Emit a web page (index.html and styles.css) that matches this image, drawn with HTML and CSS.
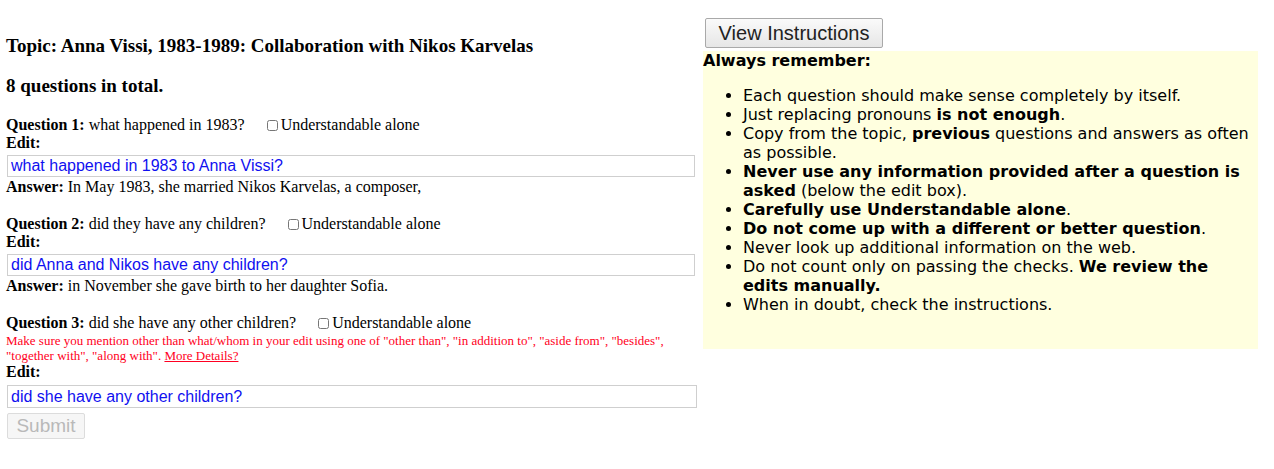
FILE: index.html
```html
<!DOCTYPE html>
<html>
<head>
<meta charset="utf-8">
<link rel="stylesheet" href="styles.css">
</head>
<body>
<div class="page">
  <div class="left">
    <h3 class="title">Topic: Anna Vissi, 1983-1989: Collaboration with Nikos Karvelas</h3>
    <h3 class="title">8 questions in total.</h3>

    <div class="q">
      <div class="qline"><b>Question 1:</b> what happened in 1983? <label class="ua"><input type="checkbox" class="cb">Understandable alone</label></div>
      <div class="lbl">Edit:</div>
      <input class="edit" type="text" value="what happened in 1983 to Anna Vissi?">
      <div class="ans"><b>Answer:</b> In May 1983, she married Nikos Karvelas, a composer,</div>
    </div>

    <div class="q">
      <div class="qline"><b>Question 2:</b> did they have any children? <label class="ua"><input type="checkbox" class="cb">Understandable alone</label></div>
      <div class="lbl">Edit:</div>
      <input class="edit" type="text" value="did Anna and Nikos have any children?">
      <div class="ans"><b>Answer:</b> in November she gave birth to her daughter Sofia.</div>
    </div>

    <div class="q">
      <div class="qline"><b>Question 3:</b> did she have any other children? <label class="ua"><input type="checkbox" class="cb">Understandable alone</label></div>
      <div class="warn">Make sure you mention other than what/whom in your edit using one of "other than", "in addition to", "aside from", "besides", "together with", "along with". <a href="#" class="more">More Details?</a></div>
      <div class="lbl">Edit:</div>
      <input class="edit edit3" type="text" value="did she have any other children?">
    </div>

    <button class="submit" disabled>Submit</button>
  </div>

  <div class="right">
    <button class="view">View Instructions</button>
    <div class="panel">
      <div class="remember">Always remember:</div>
      <ul class="rules">
        <li>Each question should make sense completely by itself.</li>
        <li>Just replacing pronouns <b>is not enough</b>.</li>
        <li>Copy from the topic, <b>previous</b> questions and answers as often as possible.</li>
        <li><b>Never use any information provided after a question is asked</b> (below the edit box).</li>
        <li><b>Carefully use Understandable alone</b>.</li>
        <li><b>Do not come up with a different or better question</b>.</li>
        <li>Never look up additional information on the web.</li>
        <li>Do not count only on passing the checks. <b>We review the edits manually.</b></li>
        <li>When in doubt, check the instructions.</li>
      </ul>
    </div>
  </div>
</div>
</body>
</html>
```

FILE: styles.css
```css
html, body {
  margin: 0;
  padding: 0;
  background: #ffffff;
}

.page {
  display: flex;
  align-items: flex-start;
  padding-left: 6px;
  gap: 6px;
  font-family: "Liberation Serif", "Times New Roman", serif;
  color: #000;
}

.left {
  width: 691px;
  flex: none;
  display: flex;
  flex-direction: column;
  align-items: flex-start;
  font-size: 16px;
  line-height: 18px;
}

.title {
  font-size: 19px;
  line-height: 22px;
  margin: 35px 0 0 0;
  font-weight: bold;
}

.title + .title {
  margin-top: 18px;
}

.q {
  display: flex;
  flex-direction: column;
  align-items: stretch;
  width: 100%;
}

.left > .title + .title + .q {
  margin-top: 19px;
}

.q + .q {
  margin-top: 19px;
}

.qline {
  height: 18px;
  white-space: nowrap;
}

.ua {
  margin-left: 18px;
  display: inline-flex;
  align-items: center;
  vertical-align: top;
  height: 18px;
}

.cb {
  width: 11px;
  height: 11px;
  margin: 1px 3px 0 0;
}

.lbl {
  font-weight: bold;
  height: 18px;
}

.edit {
  box-sizing: border-box;
  width: 688px;
  height: 22px;
  margin: 3px 0 0 1px;
  padding: 0 3px;
  border: 1px solid #cfcfcf;
  font-family: "Liberation Sans", Arial, sans-serif;
  font-size: 16px;
  color: #1010f0;
  background: #fff;
  outline: none;
}

.edit3 {
  width: 690px;
  margin-top: 4px;
  height: 23px;
}

.ans {
  margin-top: 1px;
}

.warn {
  color: #ff0022;
  font-size: 13px;
  line-height: 15px;
  margin: 1px 0 0 0;
}

.more {
  color: #ff0022;
  text-decoration: underline;
}

.submit {
  margin: 5px 0 0 1px;
  box-sizing: border-box;
  width: 78px;
  height: 26px;
  padding: 0;
  font-family: "Liberation Sans", Arial, sans-serif;
  font-size: 19px;
  color: #b9b9b9;
  background: #f6f6f6;
  border: 1px solid #dcdcdc;
  border-radius: 2px;
}

.right {
  width: 555px;
  flex: none;
  display: flex;
  flex-direction: column;
  align-items: flex-start;
  font-family: "DejaVu Sans", Verdana, sans-serif;
  font-size: 16px;
}

.view {
  margin: 18px 0 0 2px;
  box-sizing: border-box;
  width: 178px;
  height: 30px;
  padding: 0;
  font-family: "Liberation Sans", Arial, sans-serif;
  font-size: 20px;
  color: #222;
  background: linear-gradient(#fafafa, #e6e6e6);
  border: 1px solid #a9a9a9;
  border-radius: 2px;
}

.panel {
  margin-top: 3px;
  width: 555px;
  box-sizing: border-box;
  background: #ffffdf;
  padding-bottom: 35px;
  line-height: 19px;
}

.remember {
  font-weight: bold;
}

.rules {
  margin: 16px 0 0 0;
  padding: 0 4px 0 40px;
}
```
